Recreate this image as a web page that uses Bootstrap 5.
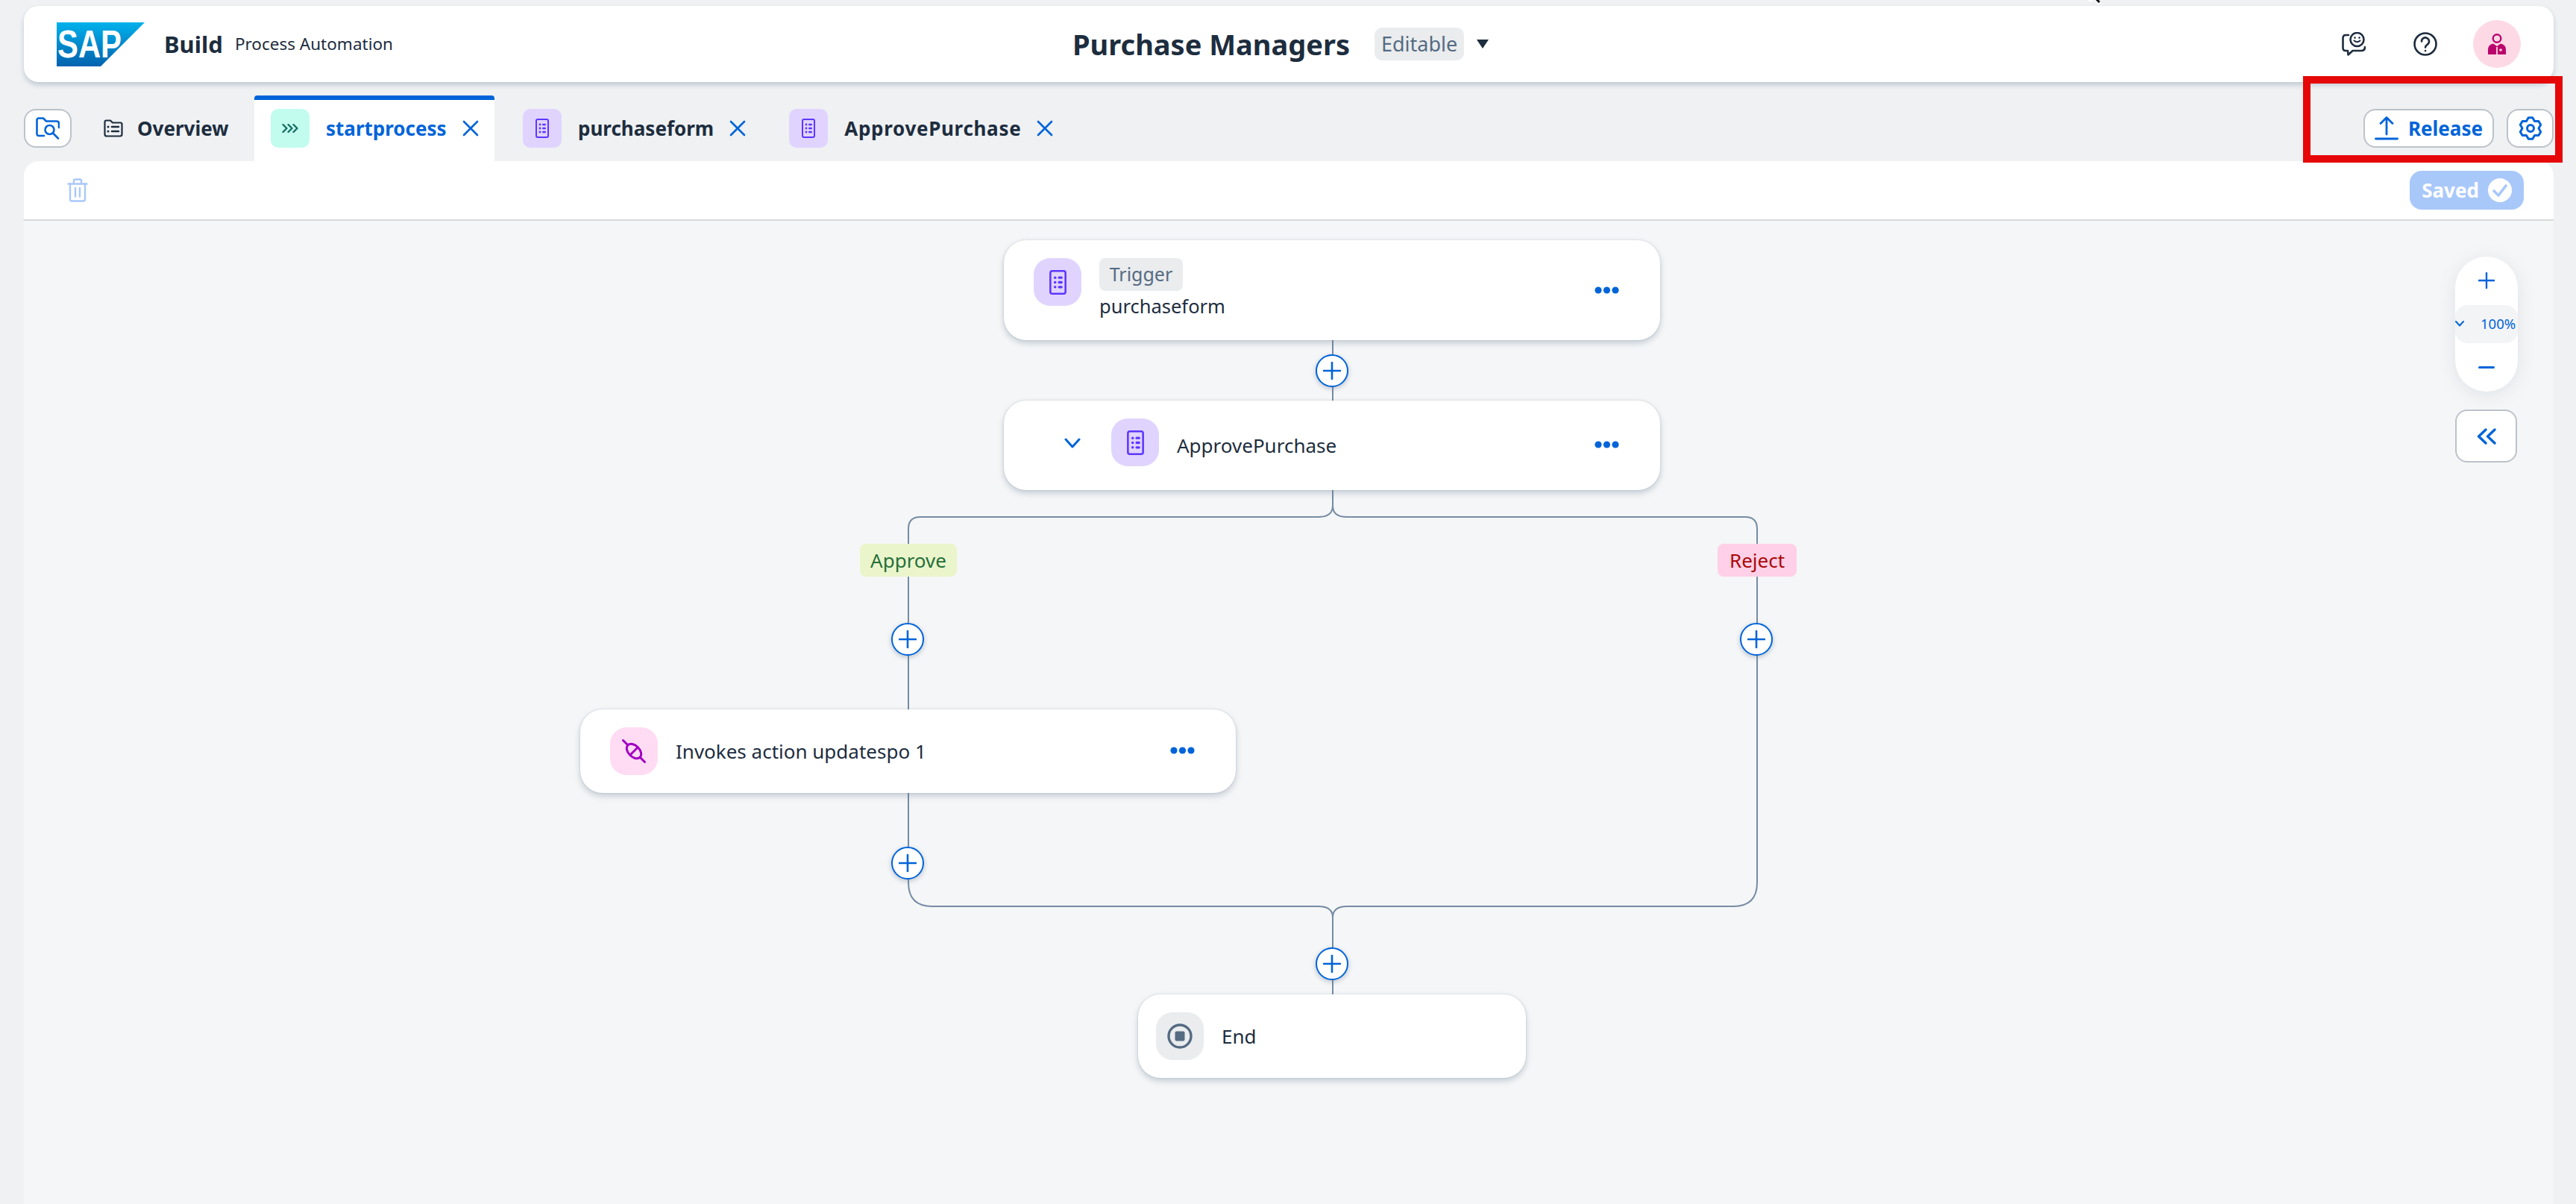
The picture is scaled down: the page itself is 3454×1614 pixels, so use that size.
<!DOCTYPE html>
<html lang="en">
<head>
    <meta charset="UTF-8">
    <title>Purchase Managers - SAP Build Process Automation</title>
    <link href="https://cdn.jsdelivr.net/npm/bootstrap@5.3.0/dist/css/bootstrap.min.css" rel="stylesheet">
    <style>
        html, body {
            height: 1614px;
            overflow: hidden;
        }
        body {
            background: #eff1f3;
            color: #1d2d3e;
            font-family: "Noto Sans", "Open Sans", sans-serif;
            padding: 8px 30px 0 32px;
            position: relative;
        }
        svg { display: block; flex: none; }

        /* shell header */
        .shell-bar {
            height: 102px;
            background: #fff;
            border-radius: 20px;
            box-shadow: 0 4px 6px rgba(91, 115, 139, .3);
            padding: 0 44px 0 44px;
            position: relative;
            z-index: 2;
        }
        .shell-build { font-size: 31px; font-weight: 700; margin-left: 26px; line-height: 1; }
        .shell-product { font-size: 22.5px; margin-left: 16px; line-height: 1; }
        .shell-left { width: 1362px; }
        .shell-title { font-size: 38px; font-weight: 700; line-height: 1; }
        .state-chip {
            height: 44px;
            width: 120px;
            background: #eaecee;
            color: #556b82;
            font-size: 27px;
            border-radius: 10px;
            margin-left: 33px;
            margin-right: 17px;
        }
        .shell-actions { margin-left: auto; }
        .shell-avatar {
            width: 64px;
            height: 64px;
            border-radius: 50%;
            background: #fdd9e6;
        }
        .shell-action-gap { margin-right: 64px; }
        .shell-action-gap2 { margin-right: 48px; }

        /* tab strip */
        .tab-strip { height: 106px; position: relative; }
        .ghost-btn {
            height: 52px;
            background: #fff;
            border: 2px solid #bcc3ca;
            border-radius: 16px;
            color: #0064d9;
            font-weight: 700;
            padding: 0;
        }
        .ghost-search { width: 64px; margin-top: 36px; }
        .tab-item {
            height: 88px;
            margin-top: 18px;
            padding-top: 18px;
            font-size: 26px;
            font-weight: 700;
            line-height: 1;
        }
        .tab-inner { height: 52px; }
        .tab-overview { margin-left: 43px; width: 202px; }
        .tab-overview span { margin-left: 19px; }
        .tab-active {
            width: 322px;
            background: #fff;
            border-top: 6px solid #0064d9;
            border-radius: 4px 4px 0 0;
            padding: 12px 0 0 22px;
            color: #0064d9;
        }
        .tab-plain { margin-left: 38px; }
        .tab-last { margin-left: 58px; letter-spacing: .7px; }
        .tab-tile {
            width: 52px;
            height: 52px;
            border-radius: 10px;
            margin-right: 22px;
        }
        .tile-green { background: #c2fcee; }
        .tile-violet { background: #e0d4ff; }
        .tab-close { margin-left: 21px; }
        .strip-actions { margin-left: auto; margin-top: 36px; }
        .ghost-release { width: 175px; font-size: 26px; margin-right: 17px; }
        .ghost-release span { margin-left: 13px; line-height: 1; }
        .ghost-gear { width: 63px; }

        /* red highlight on the screenshot */
        .mark-box {
            position: absolute;
            left: 3088px;
            top: 102px;
            width: 348px;
            height: 116px;
            border: 10px solid #e60808;
            z-index: 3;
        }
        .cursor-tip { position: absolute; left: 2797px; top: 0; z-index: 4; }

        /* editor panel */
        .editor-panel {
            height: 1398px;
            background: #f5f6f7;
            border-radius: 20px 20px 0 0;
            overflow: hidden;
        }
        .editor-toolbar {
            height: 80px;
            background: #fff;
            border-bottom: 2px solid #d9d9d9;
            padding: 0 40px 0 58px;
        }
        .saved-btn {
            width: 153px;
            height: 52px;
            border: 0;
            border-radius: 16px;
            background: #a9c8fa;
            color: #fff;
            font-size: 26px;
            font-weight: 700;
            padding: 0;
        }
        .saved-btn span { margin-right: 12px; line-height: 1; }

        /* diagram */
        .flow-canvas { position: relative; height: 1318px; }
        .flow-lines { position: absolute; left: 0; top: 0; }
        .flow-node {
            position: absolute;
            background: #fff;
            border-radius: 30px;
            box-shadow: 0 0 2px rgba(91, 115, 139, .3), 0 4px 8px rgba(91, 115, 139, .32);
            padding: 24px 40px;
            font-size: 26px;
        }
        .node-trigger { left: 1314px; top: 26px; width: 880px; height: 134px; }
        .node-approve { left: 1314px; top: 241px; width: 880px; height: 120px; }
        .node-invoke { left: 746px; top: 655px; width: 879px; height: 112px; }
        .node-end { left: 1494px; top: 1037px; width: 520px; height: 112px; padding-left: 24px; }
        .node-tile {
            width: 64px;
            height: 64px;
            border-radius: 22px;
            margin-right: 24px;
        }
        .tile-pink { background: #ffdcf3; }
        .tile-grey { background: #eaecee; }
        .node-label { line-height: 64px; }
        .node-approve .node-label { line-height: 72px; }
        .node-more { margin-left: auto; margin-top: 26px; margin-right: 15px; }
        .node-approve .node-more { margin-top: 30px; }
        .node-trigger .node-more { margin-top: 38px; }
        .node-expand { margin: 26px 41px 0 41px; }
        .trigger-chip {
            width: 112px;
            height: 44px;
            background: #eaecee;
            color: #556b82;
            border-radius: 8px;
            font-size: 25px;
        }
        .trigger-name { line-height: 34px; margin-top: 3px; font-size: 25.5px; }
        .branch-chip {
            position: absolute;
            top: 433px;
            height: 44px;
            border-radius: 8px;
            font-size: 26px;
        }
        .chip-approve { left: 1121px; width: 130px; background: #ebf5cb; color: #256f3a; }
        .chip-reject { left: 2271px; width: 106px; background: #ffd0e7; color: #aa0808; }
        .add-step {
            position: absolute;
            width: 44px;
            height: 44px;
            background: #fff;
            border: 2px solid #0064d9;
            border-radius: 50%;
            box-shadow: 0 2px 6px rgba(91, 115, 139, .4);
            padding: 0;
        }
        .add-1 { left: 1732px; top: 179px; }
        .add-2 { left: 1163px; top: 539px; }
        .add-3 { left: 2301px; top: 539px; }
        .add-4 { left: 1163px; top: 839px; }
        .add-5 { left: 1732px; top: 974px; }

        /* zoom controls */
        .zoom-pill {
            position: absolute;
            left: 3260px;
            top: 48px;
            width: 84px;
            height: 181px;
            background: #fff;
            border-radius: 42px;
            box-shadow: 0 4px 24px rgba(91, 115, 139, .14);
            color: #0064d9;
        }
        .zoom-end { height: 65px; }
        .zoom-mid {
            height: 52px;
            background: #f3f4f6;
            border-radius: 16px;
            font-size: 18.5px;
            padding-bottom: 2px;
            white-space: nowrap;
        }
        .zoom-mid span { margin-left: 22px; }
        .collapse-btn {
            position: absolute;
            left: 3260px;
            top: 253px;
            width: 83px;
            height: 71px;
        }
    </style>
</head>
<body>
    <svg width="0" height="0" class="position-absolute">
        <defs>
            <linearGradient id="sapFill" x1="0" y1="0" x2="0" y2="1">
                <stop offset="0" stop-color="#00b1eb"/>
                <stop offset="1" stop-color="#0062ae"/>
            </linearGradient>
            <symbol id="formIcon" viewBox="0 0 18 26">
                <rect x="1" y="1" width="16" height="24" rx="2" fill="none" stroke="#5d36ff" stroke-width="2"/>
                <g fill="#5d36ff">
                    <circle cx="6" cy="8" r="1.4"/><circle cx="6" cy="13" r="1.4"/><circle cx="6" cy="18" r="1.4"/>
                    <rect x="9" y="6.7" width="5" height="2.6" rx="1.3"/><rect x="9" y="11.7" width="5" height="2.6" rx="1.3"/><rect x="9" y="16.7" width="5" height="2.6" rx="1.3"/>
                </g>
            </symbol>
            <symbol id="closeIcon" viewBox="0 0 22 22">
                <path d="M2 2 20 20M20 2 2 20" fill="none" stroke="#0064d9" stroke-width="2.6" stroke-linecap="round"/>
            </symbol>
            <symbol id="plusIcon" viewBox="0 0 26 26">
                <path d="M13 1V25M1 13H25" fill="none" stroke="#0064d9" stroke-width="2.8" stroke-linecap="round"/>
            </symbol>
            <symbol id="moreIcon" viewBox="0 0 33 10">
                <circle cx="5" cy="5" r="4.6" fill="#0064d9"/><circle cx="16.5" cy="5" r="4.6" fill="#0064d9"/><circle cx="28" cy="5" r="4.6" fill="#0064d9"/>
            </symbol>
        </defs>
    </svg>

    <svg class="cursor-tip" width="24" height="10" viewBox="0 0 24 10">
        <path d="M2 0 6 3 10 0Z" fill="#fff"/><path d="M11 0 16 6 20 3 17 0Z" fill="#fff"/><path d="M13 0 17 4 19 2 17 0Z" fill="#000"/>
    </svg>
    <div class="mark-box"></div>

    <header class="shell-bar d-flex align-items-center">
        <div class="shell-left d-flex align-items-center">
            <svg width="118" height="59" viewBox="0 0 118 59">
                <path d="M0 0H118L59 59H0Z" fill="url(#sapFill)"/>
                <text x="1" y="47" fill="#fff" font-family="Liberation Sans" font-weight="700" font-size="52" textLength="86" lengthAdjust="spacingAndGlyphs">SAP</text>
            </svg>
            <span class="shell-build">Build</span>
            <span class="shell-product">Process Automation</span>
        </div>
        <span class="shell-title">Purchase Managers</span>
        <span class="state-chip d-flex align-items-center justify-content-center">Editable</span>
        <svg width="16" height="12" viewBox="0 0 16 12"><path d="M0 0H16L8 12Z" fill="#1d2d3e"/></svg>
        <div class="shell-actions d-flex align-items-center">
            <svg class="shell-action-gap" width="32" height="32" viewBox="0 0 32 32" fill="none" stroke="#1d2d3e" stroke-width="2.6" stroke-linecap="round" stroke-linejoin="round">
                <path d="M9 4H5Q1.500 4 1.500 8V21Q1.500 25 5 25H8L8.500 30.500 14.500 25H26Q31 25 31 20"/>
                <circle cx="20.500" cy="10" r="9"/>
                <path d="M16.500 11.500Q20.500 15 24.500 11.500" stroke-width="2"/>
                <path d="M17.500 7.500V7.600M23.500 7.500V7.600" stroke-width="2.600"/>
            </svg>
            <svg class="shell-action-gap2" width="32" height="32" viewBox="0 0 32 32" fill="none" stroke="#1d2d3e" stroke-width="2.6" stroke-linecap="round">
                <circle cx="16" cy="16" r="14.500"/>
                <path d="M11 12.500A5 5 0 1 1 18.800 16.600C17 17.800 16 18.600 16 20.500"/>
                <path d="M16 25V25.100"/>
            </svg>
            <div class="shell-avatar d-flex align-items-center justify-content-center">
                <svg width="24" height="28" viewBox="0 0 24 28">
                    <circle cx="12" cy="6.500" r="5.300" fill="none" stroke="#ba066c" stroke-width="2.400"/>
                    <path d="M0 28V21Q0 15 7 13.500L12 17 17 13.500Q24 15 24 21V28Z" fill="#ba066c"/>
                    <path d="M12 18V28" stroke="#fdd9e6" stroke-width="1.800"/>
                    <circle cx="17" cy="22" r="1.800" fill="#fdd9e6"/>
                </svg>
            </div>
        </div>
    </header>

    <nav class="tab-strip d-flex">
        <button class="ghost-btn ghost-search d-flex align-items-center justify-content-center" type="button" aria-label="Search">
            <svg width="32" height="30" viewBox="0 0 32 30" fill="none" stroke="#0064d9" stroke-width="2.600" stroke-linecap="round" stroke-linejoin="round">
                <path d="M11 25H4Q1.500 25 1.500 22.500V4Q1.500 1.500 4 1.500H10L14 5.500H28Q31 5.500 31 8.500V14"/>
                <circle cx="18.500" cy="17" r="6"/>
                <path d="M23 21.500 30 28.500"/>
            </svg>
        </button>
        <div class="tab-item tab-overview d-flex align-items-start">
            <div class="tab-inner d-flex align-items-center">
                <svg width="26" height="24" viewBox="0 0 26 24" fill="none" stroke="#1d2d3e" stroke-width="2.200" stroke-linecap="round" stroke-linejoin="round">
                    <path d="M1.500 20V3.500Q1.500 1.500 3.500 1.500H9L12 4.500H22.500Q24.500 4.500 24.500 6.500V20Q24.500 22.500 22 22.500H4Q1.500 22.500 1.500 20Z"/>
                    <path d="M6 10V10.100M6 16V16.100" stroke-width="3"/>
                    <path d="M11 10H20M11 16H20" stroke-width="2.500"/>
                </svg>
                <span>Overview</span>
            </div>
        </div>
        <div class="tab-item tab-active">
            <div class="tab-inner d-flex align-items-center">
                <div class="tab-tile tile-green d-flex align-items-center justify-content-center">
                    <svg width="22" height="12" viewBox="0 0 22 12" fill="none" stroke="#0f6b5e" stroke-width="2.200" stroke-linecap="round" stroke-linejoin="round">
                        <path d="M1.500 1 6.500 6 1.500 11M8.500 1 13.500 6 8.500 11M15.500 1 20.500 6 15.500 11"/>
                    </svg>
                </div>
                <span>startprocess</span>
                <svg class="tab-close" width="22" height="22"><use href="#closeIcon"/></svg>
            </div>
        </div>
        <div class="tab-item tab-plain">
            <div class="tab-inner d-flex align-items-center">
                <div class="tab-tile tile-violet d-flex align-items-center justify-content-center">
                    <svg width="18" height="26"><use href="#formIcon"/></svg>
                </div>
                <span>purchaseform</span>
                <svg class="tab-close" width="22" height="22"><use href="#closeIcon"/></svg>
            </div>
        </div>
        <div class="tab-item tab-last">
            <div class="tab-inner d-flex align-items-center">
                <div class="tab-tile tile-violet d-flex align-items-center justify-content-center">
                    <svg width="18" height="26"><use href="#formIcon"/></svg>
                </div>
                <span>ApprovePurchase</span>
                <svg class="tab-close" width="22" height="22"><use href="#closeIcon"/></svg>
            </div>
        </div>
        <div class="strip-actions d-flex">
            <button class="ghost-btn ghost-release d-flex align-items-center justify-content-center" type="button">
                <svg width="32" height="32" viewBox="0 0 32 32" fill="none" stroke="#0064d9" stroke-width="2.800" stroke-linecap="round" stroke-linejoin="round">
                    <path d="M16 24V2M8 9.500 16 1.500 24 9.500"/>
                    <path d="M1.500 30H30.500"/>
                </svg>
                <span>Release</span>
            </button>
            <button class="ghost-btn ghost-gear d-flex align-items-center justify-content-center" type="button" aria-label="Settings">
                <svg width="32" height="32" viewBox="0 0 32 32" fill="none" stroke="#0064d9" stroke-width="3" stroke-linejoin="round">
                    <path d="M13.200 1.800H18.800L21.500 6.500 26.900 6.500 29.700 11.300 27 16 29.700 20.700 26.900 25.500H21.500L18.800 30.200H13.200L10.500 25.500H5.100L2.300 20.700 5 16 2.300 11.300 5.100 6.500H10.500Z"/>
                    <circle cx="16" cy="16" r="4.500"/>
                </svg>
            </button>
        </div>
    </nav>

    <main class="editor-panel">
        <div class="editor-toolbar d-flex align-items-center justify-content-between">
            <svg width="28" height="32" viewBox="0 0 28 32" fill="none" stroke="#a9c8fa" stroke-width="2.400" stroke-linecap="round" stroke-linejoin="round">
                <path d="M1.500 7.500H26.500M9 7.500V3Q9 1.500 10.500 1.500H17.500Q19 1.500 19 3V7.500"/>
                <path d="M4 7.500V28Q4 30.500 6.500 30.500H21.500Q24 30.500 24 28V7.500"/>
                <path d="M11 13V24.500M17 13V24.500"/>
            </svg>
            <button class="saved-btn d-flex align-items-center justify-content-center" type="button">
                <span>Saved</span>
                <svg width="32" height="32" viewBox="0 0 32 32">
                    <circle cx="16" cy="16" r="16" fill="#fff"/>
                    <path d="M8 17 14 23 24 10" fill="none" stroke="#a9c8fa" stroke-width="3.600" stroke-linecap="round" stroke-linejoin="round"/>
                </svg>
            </button>
        </div>

        <div class="flow-canvas">
            <svg class="flow-lines" width="3392" height="1318" viewBox="32 296 3392 1318" fill="none" stroke="#758ca4" stroke-width="2">
                <path d="M1787 456V537"/>
                <path d="M1787 657V678Q1787 693 1768 693H1234Q1218 693 1218 709V951"/>
                <path d="M1787 657V678Q1787 693 1806 693H2340Q2356 693 2356 709V1183Q2356 1215 2324 1215H1806Q1787 1215 1787 1230V1333"/>
                <path d="M1218 1063V1183Q1218 1215 1250 1215H1768Q1787 1215 1787 1230"/>
            </svg>

            <div class="flow-node node-trigger d-flex align-items-start">
                <div class="node-tile tile-violet d-flex align-items-center justify-content-center">
                    <svg width="23" height="33"><use href="#formIcon"/></svg>
                </div>
                <div>
                    <div class="trigger-chip d-flex align-items-center justify-content-center">Trigger</div>
                    <div class="trigger-name">purchaseform</div>
                </div>
                <svg class="node-more" width="33" height="10"><use href="#moreIcon"/></svg>
            </div>

            <div class="flow-node node-approve d-flex align-items-start">
                <svg class="node-expand" width="22" height="14" viewBox="0 0 22 14" fill="none" stroke="#0064d9" stroke-width="3" stroke-linecap="round" stroke-linejoin="round">
                    <path d="M2 2 11 12 20 2"/>
                </svg>
                <div class="node-tile tile-violet d-flex align-items-center justify-content-center">
                    <svg width="23" height="33"><use href="#formIcon"/></svg>
                </div>
                <div class="node-label">ApprovePurchase</div>
                <svg class="node-more" width="33" height="10"><use href="#moreIcon"/></svg>
            </div>

            <div class="flow-node node-invoke d-flex align-items-start">
                <div class="node-tile tile-pink d-flex align-items-center justify-content-center">
                    <svg width="32" height="32" viewBox="0 0 32 32" fill="none" stroke="#a100c2" stroke-width="3" stroke-linecap="round">
                        <path d="M1.500 1.500 7 7M25 25 30.500 30.500M12 20 20 12"/>
                        <ellipse cx="16" cy="16" rx="11.500" ry="7.500" transform="rotate(45 16 16)"/>
                    </svg>
                </div>
                <div class="node-label">Invokes action updatespo 1</div>
                <svg class="node-more" width="33" height="10"><use href="#moreIcon"/></svg>
            </div>

            <div class="flow-node node-end d-flex align-items-start">
                <div class="node-tile tile-grey d-flex align-items-center justify-content-center">
                    <svg width="34" height="34" viewBox="0 0 34 34">
                        <circle cx="17" cy="17" r="15" fill="none" stroke="#556b82" stroke-width="3.400"/>
                        <rect x="10.500" y="10.500" width="13" height="13" rx="2" fill="#556b82"/>
                    </svg>
                </div>
                <div class="node-label">End</div>
            </div>

            <span class="branch-chip chip-approve d-flex align-items-center justify-content-center">Approve</span>
            <span class="branch-chip chip-reject d-flex align-items-center justify-content-center">Reject</span>

            <button class="add-step add-1 d-flex align-items-center justify-content-center" type="button" aria-label="Add"><svg width="24" height="24"><use href="#plusIcon"/></svg></button>
            <button class="add-step add-2 d-flex align-items-center justify-content-center" type="button" aria-label="Add"><svg width="24" height="24"><use href="#plusIcon"/></svg></button>
            <button class="add-step add-3 d-flex align-items-center justify-content-center" type="button" aria-label="Add"><svg width="24" height="24"><use href="#plusIcon"/></svg></button>
            <button class="add-step add-4 d-flex align-items-center justify-content-center" type="button" aria-label="Add"><svg width="24" height="24"><use href="#plusIcon"/></svg></button>
            <button class="add-step add-5 d-flex align-items-center justify-content-center" type="button" aria-label="Add"><svg width="24" height="24"><use href="#plusIcon"/></svg></button>

            <div class="zoom-pill d-flex flex-column">
                <div class="zoom-end d-flex align-items-center justify-content-center">
                    <svg width="22" height="22"><use href="#plusIcon"/></svg>
                </div>
                <div class="zoom-mid d-flex align-items-center">
                    <svg width="12" height="8" viewBox="0 0 12 8" fill="none" stroke="#0064d9" stroke-width="2" stroke-linecap="round" stroke-linejoin="round"><path d="M1 1 6 6.500 11 1"/></svg>
                    <span>100%</span>
                </div>
                <div class="zoom-end d-flex align-items-center justify-content-center">
                    <svg width="22" height="3" viewBox="0 0 22 3"><rect width="22" height="3" rx="1.500" fill="#0064d9"/></svg>
                </div>
            </div>

            <button class="ghost-btn collapse-btn d-flex align-items-center justify-content-center" type="button" aria-label="Collapse">
                <svg width="26" height="22" viewBox="0 0 26 22" fill="none" stroke="#0064d9" stroke-width="3.400" stroke-linecap="round" stroke-linejoin="round">
                    <path d="M12 2 2.500 11 12 20M24 2 14.500 11 24 20"/>
                </svg>
            </button>
        </div>
    </main>
    <script src="https://cdn.jsdelivr.net/npm/bootstrap@5.3.0/dist/js/bootstrap.bundle.min.js"></script>
</body>
</html>
